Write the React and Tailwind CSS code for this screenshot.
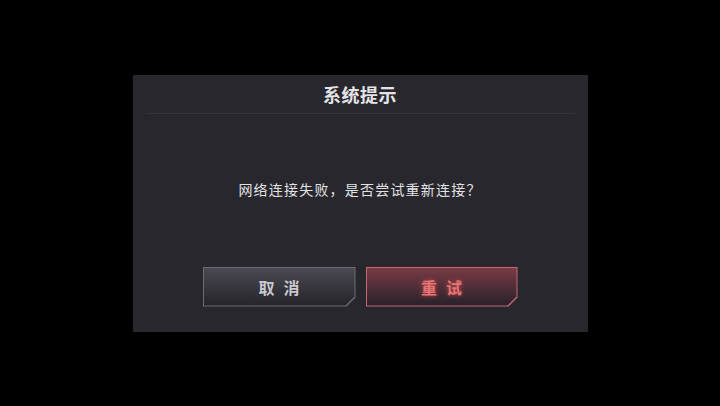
import React from "react";

const chamfer =
  "[clip-path:polygon(0_0,100%_0,100%_calc(100%-9px),calc(100%-9px)_100%,0_100%)]";

export default function App() {
  return (
    <div
      className="w-[720px] h-[406px] bg-black flex items-center justify-center"
      style={{ fontFamily: '"Noto Sans CJK SC", "Noto Sans", sans-serif' }}
    >
      <div className="w-[455px] h-[257px] bg-[#28272e] flex flex-col">
        <div className="h-[38px] flex items-center justify-center pt-[1px]">
          <span className="text-[18px] font-bold text-[#e4e4e6] tracking-[0.5px]">
            系统提示
          </span>
        </div>
        <div className="mx-[13px] h-px bg-[#34333b]" />
        <div className="h-[153px] flex items-center justify-center pb-[2px]">
          <span className="text-[14px] text-[#e2e2e4] tracking-[1.2px]">
            网络连接失败，是否尝试重新连接？
          </span>
        </div>
        <div className="flex justify-center gap-[10px]">
          <div
            className={`w-[153px] h-[40px] p-px bg-[#6c6b72] ${chamfer}`}
          >
            <div
              className={`w-full h-full bg-gradient-to-b from-[#4b4a52] to-[#25242b] flex items-center justify-center gap-[9px] ${chamfer}`}
            >
              <span className="text-[16px] font-bold text-[#c9c9cd]">取</span>
              <span className="text-[16px] font-bold text-[#c9c9cd]">消</span>
            </div>
          </div>
          <div
            className={`w-[152px] h-[40px] p-px bg-[#c56870] ${chamfer}`}
          >
            <div
              className={`w-full h-full bg-gradient-to-b from-[#7a3a45] to-[#27212a] flex items-center justify-center gap-[9px] ${chamfer}`}
            >
              <span className="text-[16px] font-bold text-[#e67474] [text-shadow:0_0_5px_rgba(230,90,90,0.7)]">
                重
              </span>
              <span className="text-[16px] font-bold text-[#e67474] [text-shadow:0_0_5px_rgba(230,90,90,0.7)]">
                试
              </span>
            </div>
          </div>
        </div>
      </div>
    </div>
  );
}
